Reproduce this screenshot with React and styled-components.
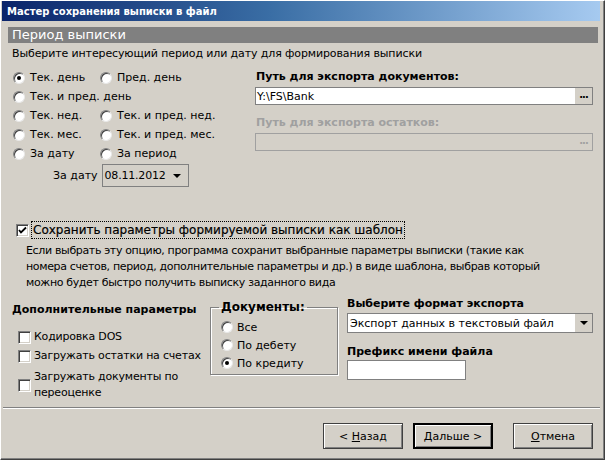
import React from 'react';
import styled, { createGlobalStyle } from 'styled-components';

const Global = createGlobalStyle`
  html, body { margin: 0; padding: 0; background: #d4d0c8; }
  body { font-family: "DejaVu Sans", Tahoma, sans-serif; font-size: 11px; color: #000; }
  * { box-sizing: border-box; }
`;

const Window = styled.div`
  width: 605px;
  height: 460px;
  display: flex;
  flex-direction: column;
  background: #d4d0c8;
  border-top: 1px solid #fff;
  border-left: 1px solid #fff;
  border-right: 1px solid #404040;
  border-bottom: 1px solid #404040;
  box-shadow: inset -1px -1px #808080;
  padding: 0 4px 3px 1px;
  overflow: hidden;
`;

const TitleBar = styled.div`
  height: 20px;
  flex: none;
  display: flex;
  align-items: center;
  padding-left: 5px;
  background: linear-gradient(to right, #0a246a 0%, #3a6ea5 45%, #a6caf0 100%);
  color: #fff;
  font-weight: bold;
  font-size: 10px;
`;

const Body = styled.div`
  flex: 1;
  display: flex;
  flex-direction: column;
  padding: 6px 2px 0 6px;
`;

const SectionHeader = styled.div`
  height: 16px;
  background: #808080;
  color: #fff;
  font-size: 13px;
  line-height: 16px;
  padding-left: 4px;
`;

const Desc = styled.div`
  margin: 4px 0 0 4px;
  line-height: 14px;
  letter-spacing: -0.12px;
`;

const TopArea = styled.div`
  display: grid;
  grid-template-columns: 247px 1fr;
  margin-top: 7px;
`;

const RadioGrid = styled.div`
  display: grid;
  grid-template-columns: 87px auto;
  grid-auto-rows: 19px;
  padding-left: 5px;
`;

const RadioItem = styled.label`
  display: flex;
  align-items: center;
  gap: 5px;
  white-space: nowrap;
  grid-column: ${p => (p.$span ? '1 / span 2' : 'auto')};
`;

const RadioCircle = styled.span`
  width: 12px;
  height: 12px;
  flex: none;
  border-radius: 50%;
  background: #fff;
  border: 1px solid;
  border-color: #808080 #e8e8e8 #e8e8e8 #808080;
  box-shadow: inset 1px 1px #404040;
  display: flex;
  align-items: center;
  justify-content: center;
  &::after {
    content: '';
    width: 4px;
    height: 4px;
    border-radius: 50%;
    background: ${p => (p.$on ? '#000' : 'transparent')};
  }
`;

const DateRow = styled.div`
  display: flex;
  align-items: center;
  gap: 4px;
  padding-left: 45px;
  margin-top: 1px;
  height: 23px;
`;

const DateSelect = styled.div`
  width: 87px;
  height: 23px;
  border: 1px solid #808080;
  display: flex;
  align-items: center;
  justify-content: space-between;
  padding: 0 7px 0 2px;
  font-size: 11px;
  letter-spacing: -0.2px;
`;

const Arrow = styled.span`
  width: 0;
  height: 0;
  border-left: 4px solid transparent;
  border-right: 4px solid transparent;
  border-top: 4px solid #000;
`;

const PathCol = styled.div`
  display: flex;
  flex-direction: column;
  padding-right: 5px;
  padding-top: 2px;
`;

const FieldLabel = styled.div`
  font-weight: bold;
  line-height: 14px;
  padding-left: 1px;
  color: ${p => (p.$disabled ? '#a0a0a0' : '#000')};
  margin-top: ${p => p.$mt || 0}px;
`;

const PathInput = styled.div`
  margin-top: 3px;
  height: 18px;
  border: 1px solid ${p => (p.$disabled ? '#a0a0a0' : '#808080')};
  background: ${p => (p.$disabled ? '#d4d0c8' : '#fff')};
  display: flex;
  align-items: center;
  justify-content: space-between;
  padding-left: 1px;
  font-size: 11px;
`;

const DotsButton = styled.span`
  width: 17px;
  align-self: stretch;
  background: #d4d0c8;
  display: flex;
  align-items: center;
  justify-content: center;
  font-weight: bold;
  letter-spacing: -1px;
  color: ${p => (p.$disabled ? '#a0a0a0' : '#000')};
  font-size: 10px;
  padding-bottom: 3px;
`;

const CheckRow = styled.div`
  display: flex;
  align-items: center;
  gap: 2px;
  margin-top: 34px;
  padding-left: 8px;
`;

const Box = styled.span`
  width: 13px;
  height: 13px;
  flex: none;
  background: #fff;
  border: 1px solid;
  border-color: #808080 #fff #fff #808080;
  box-shadow: inset 1px 1px #404040, inset -1px -1px #d4d0c8;
  display: flex;
  align-items: center;
  justify-content: center;
`;

const FocusLabel = styled.span`
  border: 1px dotted #000;
  padding: 1px 1px;
  font-size: 12px;
  line-height: 14px;
  white-space: nowrap;
  -webkit-text-stroke: 0.2px #000;
`;

const Explain = styled.div`
  margin: 4px 0 0 18px;
  line-height: 16px;
  white-space: nowrap;
  letter-spacing: -0.35px;
`;

const BottomArea = styled.div`
  display: grid;
  grid-template-columns: 202px 137px 1fr;
  margin-top: 4px;
`;

const ExtraCol = styled.div`
  display: flex;
  flex-direction: column;
  padding-left: 4px;
  padding-top: 8px;
  white-space: nowrap;
`;

const Heading = styled.div`
  font-weight: bold;
  line-height: 14px;
  margin-top: ${p => p.$mt || 0}px;
`;

const CheckList = styled.div`
  display: flex;
  flex-direction: column;
  gap: 3px;
  margin-top: 12px;
  padding-left: 6px;
`;

const CheckItem = styled.label`
  display: flex;
  align-items: center;
  gap: 3px;
  line-height: 16px;
  letter-spacing: -0.2px;
  margin-top: ${p => p.$mt || 0}px;
`;

const GroupBox = styled.fieldset`
  margin: 5px 0 0 0;
  width: 128px;
  height: 75px;
  border: 1px solid #808080;
  box-shadow: 1px 1px #fff, inset 1px 1px #fff;
  padding: 0 0 0 10px;
  display: flex;
  flex-direction: column;
`;

const Legend = styled.legend`
  font-weight: bold;
  font-size: 12px;
  line-height: 14px;
  padding: 0 2px;
  margin-left: -2px;
`;

const GroupRadios = styled.div`
  display: flex;
  flex-direction: column;
  margin-top: 4px;
`;

const GroupRadio = styled.label`
  display: flex;
  align-items: center;
  gap: 4px;
  height: 18px;
`;

const ExportCol = styled.div`
  display: flex;
  flex-direction: column;
  padding-right: 5px;
  padding-top: 2px;
`;

const ExportSelect = styled.div`
  margin-top: 2px;
  height: 20px;
  border: 1px solid #808080;
  background: #fff;
  display: flex;
  align-items: center;
  justify-content: space-between;
  padding-left: 2px;
`;

const SelBtn = styled.span`
  width: 17px;
  align-self: stretch;
  background: #d4d0c8;
  display: flex;
  align-items: center;
  justify-content: center;
`;

const PrefixInput = styled.div`
  margin-top: 1px;
  width: 119px;
  height: 20px;
  border: 1px solid #808080;
  background: #fff;
`;

const Spacer = styled.div`
  flex: 1;
`;

const Footer = styled.div`
  flex: none;
  border-top: 1px solid #808080;
  box-shadow: inset 0 1px #fff;
  display: flex;
  justify-content: flex-end;
  padding: 15px 7px 7px 0;
  margin-left: 1px;
`;

const Button = styled.div`
  width: 80px;
  height: 26px;
  display: flex;
  align-items: center;
  justify-content: center;
  border: ${p => (p.$default ? '2px solid #000' : '1px solid #404040')};
  box-shadow: inset 1px 1px #fff, inset -1px -1px #808080;
  margin-left: ${p => p.$ml || 0}px;
  font-size: 11px;
  font-weight: normal;
  white-space: pre;
`;

const U = styled.span`
  text-decoration: underline;
`;

const Radio = ({ on, children, span }) => (
  <RadioItem $span={span}>
    <RadioCircle $on={on} />
    {children}
  </RadioItem>
);

const Check = ({ checked }) => (
  <Box>
    {checked && (
      <svg width="9" height="9" viewBox="0 0 9 9">
        <path d="M1 4 L3 6.5 L8 1.5" stroke="#000" strokeWidth="1.8" fill="none" />
      </svg>
    )}
  </Box>
);

export default function App() {
  return (
    <>
      <Global />
      <Window>
        <TitleBar>Мастер сохранения выписки в файл</TitleBar>
        <Body>
          <SectionHeader>Период выписки</SectionHeader>
          <Desc>Выберите интересующий период или дату для формирования выписки</Desc>
          <TopArea>
            <div>
              <RadioGrid>
                <Radio on>Тек. день</Radio>
                <Radio>Пред. день</Radio>
                <Radio span>Тек. и пред. день</Radio>
                <Radio>Тек. нед.</Radio>
                <Radio>Тек. и пред. нед.</Radio>
                <Radio>Тек. мес.</Radio>
                <Radio>Тек. и пред. мес.</Radio>
                <Radio>За дату</Radio>
                <Radio>За период</Radio>
              </RadioGrid>
              <DateRow>
                За дату
                <DateSelect>
                  08.11.2012
                  <Arrow />
                </DateSelect>
              </DateRow>
            </div>
            <PathCol>
              <FieldLabel>Путь для экспорта документов:</FieldLabel>
              <PathInput>
                Y:\FS\Bank
                <DotsButton>...</DotsButton>
              </PathInput>
              <FieldLabel $disabled $mt={11}>Путь для экспорта остатков:</FieldLabel>
              <PathInput $disabled>
                <span />
                <DotsButton $disabled>...</DotsButton>
              </PathInput>
            </PathCol>
          </TopArea>
          <CheckRow>
            <Check checked />
            <FocusLabel>Сохранить параметры формируемой выписки как шаблон</FocusLabel>
          </CheckRow>
          <Explain>
            Если выбрать эту опцию, программа сохранит выбранные параметры выписки (такие как
            <br />
            номера счетов, период, дополнительные параметры и др.) в виде шаблона, выбрав который
            <br />
            можно будет быстро получить выписку заданного вида
          </Explain>
          <BottomArea>
            <ExtraCol>
              <Heading>Дополнительные параметры</Heading>
              <CheckList>
                <CheckItem><Check />Кодировка DOS</CheckItem>
                <CheckItem><Check />Загружать остатки на счетах</CheckItem>
                <CheckItem $mt={2}><Check />Загружать документы по<br />переоценке</CheckItem>
              </CheckList>
            </ExtraCol>
            <GroupBox>
              <Legend>Документы:</Legend>
              <GroupRadios>
                <GroupRadio><RadioCircle />Все</GroupRadio>
                <GroupRadio><RadioCircle />По дебету</GroupRadio>
                <GroupRadio><RadioCircle $on />По кредиту</GroupRadio>
              </GroupRadios>
            </GroupBox>
            <ExportCol>
              <Heading>Выберите формат экспорта</Heading>
              <ExportSelect>
                Экспорт данных в текстовый файл
                <SelBtn><Arrow /></SelBtn>
              </ExportSelect>
              <Heading $mt={12}>Префикс имени файла</Heading>
              <PrefixInput />
            </ExportCol>
          </BottomArea>
          <Spacer />
        </Body>
        <Footer>
          <Button>{'< '}<U>Н</U>азад</Button>
          <Button $default $ml={10}><U>Д</U>альше{' >'}</Button>
          <Button $ml={20}><U>О</U>тмена</Button>
        </Footer>
      </Window>
    </>
  );
}
